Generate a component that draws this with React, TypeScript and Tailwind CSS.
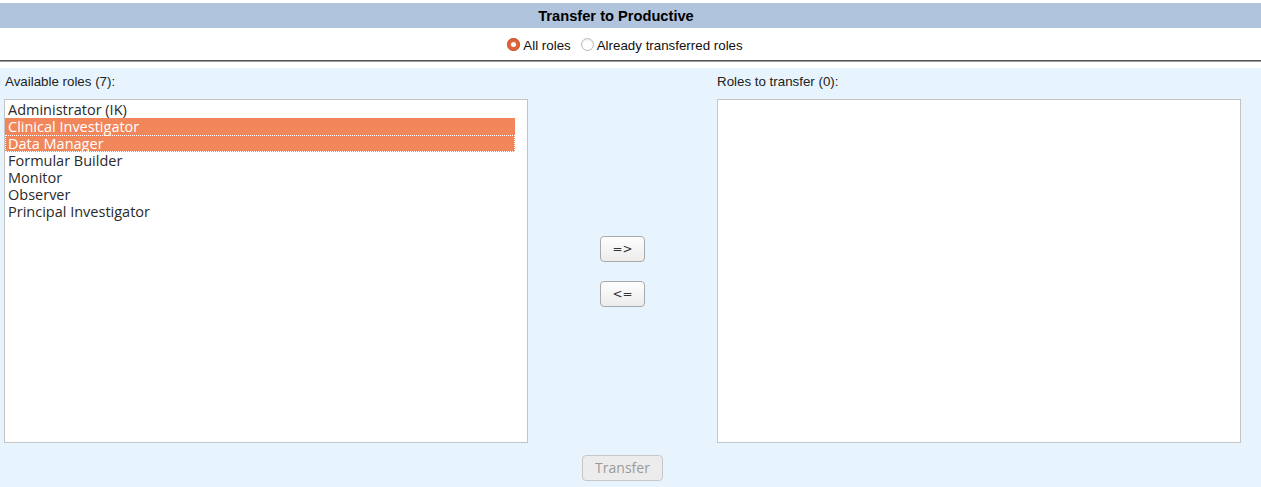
import React from "react";

const roles = [
  "Administrator (IK)",
  "Clinical Investigator",
  "Data Manager",
  "Formular Builder",
  "Monitor",
  "Observer",
  "Principal Investigator",
];

function Radio({ checked }: { checked: boolean }) {
  return checked ? (
    <span className="inline-flex w-[13px] h-[13px] rounded-full bg-[#e0643a] items-center justify-center shadow-[inset_0_0_0_1px_#c85a34] -mt-[2px]">
      <span className="w-[5px] h-[5px] rounded-full bg-white" />
    </span>
  ) : (
    <span className="inline-block w-[13px] h-[13px] rounded-full bg-white border border-[#b8b8b8] shadow-[inset_0_1px_2px_rgba(0,0,0,0.08)] -mt-[2px]" />
  );
}

function Btn({ children, disabled }: { children: React.ReactNode; disabled?: boolean }) {
  return (
    <button
      className={
        disabled
          ? "h-[26px] px-[12px] rounded-[4px] border border-[#c8c8c8] bg-[#ececec] text-[#9a9a9a] text-[14px] leading-none [font-family:'Open_Sans',sans-serif]"
          : "w-[45px] h-[26px] rounded-[4px] border border-[#a9a9a9] bg-gradient-to-b from-[#fefefe] to-[#ececec] text-[#333] text-[12px] leading-none [font-family:'DejaVu_Sans',sans-serif]"
      }
    >
      {children}
    </button>
  );
}

export default function App() {
  return (
    <div className="w-[1261px] h-[487px] bg-white [font-family:'Liberation_Sans',Arial,sans-serif] overflow-hidden">
      <div className="h-[3px]" />
      <div className="h-[25px] bg-[#b0c4de] flex items-center justify-center pr-[29px] text-[14.67px] font-bold text-black">
        Transfer to Productive
      </div>
      <div className="h-[32px] flex items-center justify-center pr-[11px] text-[13.33px] text-[#111] pt-[3px]">
        <Radio checked />
        <span className="ml-[3px] mr-[10px]">All roles</span>
        <Radio checked={false} />
        <span className="ml-[3px]">Already transferred roles</span>
      </div>
      <div className="h-[1px] bg-[#555]" />
      <div className="h-[1px] bg-[#9a9a9a]" />
      <div className="h-[6px]" />
      <div className="h-[419px] bg-[#e8f4fd] pl-[4px] pt-[5px]">
        <div className="w-[1237px] grid grid-cols-[524px_189px_524px]">
          <div>
            <div className="h-[18px] leading-[18px] pl-[1px] text-[13.33px] text-[#222]">Available roles (7):</div>
            <div className="mt-[8px] h-[344px] bg-white border border-[#c4c4c4] pt-[1px] [font-family:'Open_Sans',sans-serif] text-[14.5px] text-[#2a2a2a]">
              {roles.map((r, i) => {
                const sel = i === 1 || i === 2;
                return (
                  <div
                    key={r}
                    className={
                      "h-[17px] leading-[17px] pl-[3px] mr-[12px] whitespace-nowrap " +
                      (sel ? "bg-[#f1865a] text-white " : "") +
                      (i === 2 ? "outline-1 outline-dotted outline-white -outline-offset-1" : "")
                    }
                  >
                    {r}
                  </div>
                );
              })}
            </div>
          </div>
          <div className="flex flex-col items-center justify-center gap-[19px] pt-[26px]">
            <Btn>=&gt;</Btn>
            <Btn>&lt;=</Btn>
          </div>
          <div>
            <div className="h-[18px] leading-[18px] pl-[0px] text-[13.33px] text-[#222]">Roles to transfer (0):</div>
            <div className="mt-[8px] h-[344px] bg-white border border-[#c4c4c4]" />
          </div>
        </div>
        <div className="w-[1237px] flex justify-center mt-[12px]">
          <Btn disabled>Transfer</Btn>
        </div>
      </div>
    </div>
  );
}
